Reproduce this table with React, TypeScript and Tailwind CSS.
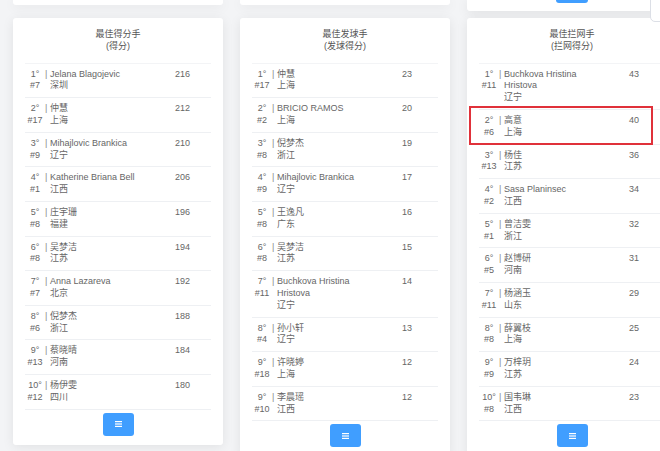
import React from "react";

type Player = {
  rank: string;
  num: string;
  name: string;
  city: string;
  score: number;
  marked?: boolean;
};

const scorers: Player[] = [
  { rank: "1°", num: "#7", name: "Jelana Blagojevic", city: "深圳", score: 216 },
  { rank: "2°", num: "#17", name: "仲慧", city: "上海", score: 212 },
  { rank: "3°", num: "#9", name: "Mihajlovic Brankica", city: "辽宁", score: 210 },
  { rank: "4°", num: "#1", name: "Katherine Briana Bell", city: "江西", score: 206 },
  { rank: "5°", num: "#8", name: "庄宇珊", city: "福建", score: 196 },
  { rank: "6°", num: "#8", name: "吴梦洁", city: "江苏", score: 194 },
  { rank: "7°", num: "#7", name: "Anna Lazareva", city: "北京", score: 192 },
  { rank: "8°", num: "#6", name: "倪梦杰", city: "浙江", score: 188 },
  { rank: "9°", num: "#13", name: "蔡晓晴", city: "河南", score: 184 },
  { rank: "10°", num: "#12", name: "杨伊雯", city: "四川", score: 180 },
];

const servers: Player[] = [
  { rank: "1°", num: "#17", name: "仲慧", city: "上海", score: 23 },
  { rank: "2°", num: "#2", name: "BRICIO RAMOS", city: "上海", score: 20 },
  { rank: "3°", num: "#8", name: "倪梦杰", city: "浙江", score: 19 },
  { rank: "4°", num: "#9", name: "Mihajlovic Brankica", city: "辽宁", score: 17 },
  { rank: "5°", num: "#8", name: "王逸凡", city: "广东", score: 16 },
  { rank: "6°", num: "#8", name: "吴梦洁", city: "江苏", score: 15 },
  { rank: "7°", num: "#11", name: "Buchkova Hristina Hristova", city: "辽宁", score: 14 },
  { rank: "8°", num: "#4", name: "孙小轩", city: "辽宁", score: 13 },
  { rank: "9°", num: "#18", name: "许晓婷", city: "上海", score: 12 },
  { rank: "9°", num: "#10", name: "李晨瑶", city: "江西", score: 12 },
];

const blockers: Player[] = [
  { rank: "1°", num: "#11", name: "Buchkova Hristina Hristova", city: "辽宁", score: 43 },
  { rank: "2°", num: "#6", name: "高意", city: "上海", score: 40, marked: true },
  { rank: "3°", num: "#13", name: "杨佳", city: "江苏", score: 36 },
  { rank: "4°", num: "#2", name: "Sasa Planinsec", city: "江西", score: 34 },
  { rank: "5°", num: "#1", name: "曾洁雯", city: "浙江", score: 32 },
  { rank: "6°", num: "#5", name: "赵博研", city: "河南", score: 31 },
  { rank: "7°", num: "#11", name: "杨涵玉", city: "山东", score: 29 },
  { rank: "8°", num: "#8", name: "薛翼枝", city: "上海", score: 25 },
  { rank: "9°", num: "#9", name: "万梓玥", city: "江苏", score: 24 },
  { rank: "10°", num: "#8", name: "国韦琳", city: "江西", score: 23 },
];

const font = {
  fontFamily: '"Liberation Sans", "Noto Sans CJK SC", sans-serif',
};

function MoreButton() {
  return (
    <div className="mx-auto flex h-[23px] w-[31px] items-center justify-center rounded-[3px] bg-[#409eff]">
      <svg width="7" height="6" viewBox="0 0 7 6">
        <rect x="0" y="0" width="7" height="1.2" fill="#fff" />
        <rect x="0" y="2.4" width="7" height="1.2" fill="#fff" />
        <rect x="0" y="4.8" width="7" height="1.2" fill="#fff" />
      </svg>
    </div>
  );
}

function Row({ p }: { p: Player }) {
  return (
    <div className="relative flex border-b border-[#eef0f3] pt-[5px] pb-[5px] leading-[11.8px]">
      <div className="w-[20px] shrink-0 text-center">
        <div>{p.rank}</div>
        <div>{p.num}</div>
      </div>
      <div className="w-[130px] shrink-0 pl-[5px] pr-[29px]">
        <div>
          <span className="-ml-[5px] inline-block w-[5px] text-[#888]">|</span>
          {p.name}
        </div>
        <div>{p.city}</div>
      </div>
      <div>{p.score}</div>
      {p.marked && (
        <div className="absolute -left-[10px] -top-[4px] h-[39px] w-[184px] border-2 border-[#e0313a]" />
      )}
    </div>
  );
}

function Board({ title, sub, list }: { title: string; sub: string; list: Player[] }) {
  return (
    <div className="rounded-[3px] bg-white px-3 pb-[9px] shadow-[0_2px_12px_0_rgba(0,0,0,0.08)]">
      <div className="border-b border-[#f3f4f6] pt-[11px] pb-[10px] text-center leading-[11.8px] text-[#555]">
        <div>{title}</div>
        <div>{sub}</div>
      </div>
      {list.map((p, i) => (
        <Row key={i} p={p} />
      ))}
      <div className="mt-[3px]">
        <MoreButton />
      </div>
    </div>
  );
}

export default function App() {
  return (
    <div
      className="relative h-[451px] w-[660px] overflow-hidden bg-[#f3f4f6] text-[9px] text-[#666]"
      style={font}
    >
      <div className="grid grid-cols-[210px_210px_210px] gap-x-[17px] pl-[13px]">
        <div className="flex flex-col">
          <div className="mb-[13px] h-[5px] rounded-b-[3px] bg-white shadow-[0_2px_12px_0_rgba(0,0,0,0.08)]" />
          <Board title="最佳得分手" sub="(得分)" list={scorers} />
        </div>
        <div className="flex flex-col">
          <div className="mb-[13px] h-[5px] rounded-b-[3px] bg-white shadow-[0_2px_12px_0_rgba(0,0,0,0.08)]" />
          <Board title="最佳发球手" sub="(发球得分)" list={servers} />
        </div>
        <div className="flex flex-col">
          <div className="mb-[7px] flex h-[11px] justify-center rounded-b-[3px] bg-white shadow-[0_2px_12px_0_rgba(0,0,0,0.08)]">
            <div className="h-[3px] w-[32px] rounded-b-[3px] bg-[#409eff]" />
          </div>
          <Board title="最佳拦网手" sub="(拦网得分)" list={blockers} />
        </div>
      </div>
      <div className="absolute -top-[10px] left-[650px] h-[32px] w-[30px] rounded-[5px] border border-[#dcdfe6] bg-white" />
    </div>
  );
}
